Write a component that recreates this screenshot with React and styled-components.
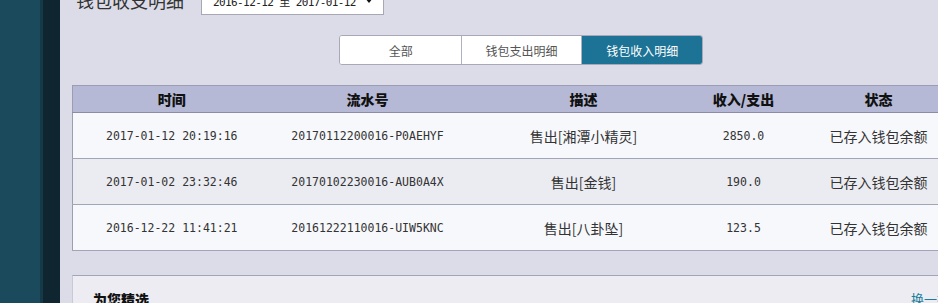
import React from "react";
import styled, { createGlobalStyle } from "styled-components";

const GlobalStyle = createGlobalStyle`
  html, body {
    margin: 0;
    padding: 0;
    overflow: hidden;
    background: #dcdce8;
  }
  body {
    font-family: "Noto Sans CJK SC", "Liberation Sans", sans-serif;
    color: #333;
  }
`;

const rows = [
  { time: "2017-01-12 20:19:16", serial: "20170112200016-P0AEHYF", desc: "售出[湘潭小精灵]", amount: "2850.0", status: "已存入钱包余额" },
  { time: "2017-01-02 23:32:46", serial: "20170102230016-AUB0A4X", desc: "售出[金钱]", amount: "190.0", status: "已存入钱包余额" },
  { time: "2016-12-22 11:41:21", serial: "20161222110016-UIW5KNC", desc: "售出[八卦坠]", amount: "123.5", status: "已存入钱包余额" },
];

const columns = [
  { title: "时间", width: 198 },
  { title: "流水号", width: 194 },
  { title: "描述", width: 238 },
  { title: "收入/支出", width: 82 },
  { title: "状态", width: 188 },
];

const tabs = ["全部", "钱包支出明细", "钱包收入明细"];

const mono = '"DejaVu Sans Mono", "Noto Sans CJK SC", monospace';

const Layout = styled.div`
  display: flex;
  width: 100vw;
  height: 303px;
  overflow: hidden;
`;

const Sidebar = styled.aside`
  flex: 0 0 60px;
  display: flex;
`;

const SideStrip = styled.div`
  flex: 0 0 ${(p) => p.$w}px;
  background: ${(p) => p.$c};
`;

const Main = styled.main`
  flex: 1;
  padding-left: 12px;
  background: #dcdce8;
  min-width: 0;
`;

const TitleRow = styled.div`
  display: flex;
  align-items: flex-end;
  gap: 17px;
  height: 30px;
  margin-top: -15px;
  padding-left: 4px;
`;

const Title = styled.h2`
  margin: 0;
  font-size: 18px;
  font-weight: normal;
  color: #333;
  line-height: 30px;
`;

const DateSelect = styled.div`
  display: flex;
  align-items: center;
  gap: 9px;
  width: 183px;
  height: 29px;
  box-sizing: border-box;
  padding-left: 11px;
  background: #fff;
  border: 1px solid #a8a8b4;
  font-family: ${mono};
  font-size: 11px;
  letter-spacing: -0.6px;
  color: #222;
  white-space: nowrap;
`;

const Caret = styled.span`
  width: 0;
  height: 0;
  border-left: 4px solid transparent;
  border-right: 4px solid transparent;
  border-top: 5px solid #111;
`;

const TabBar = styled.div`
  display: flex;
  margin: 20px 0 0 267px;
  width: 364px;
  height: 30px;
  box-sizing: border-box;
  border: 1px solid #a8a8b8;
  border-radius: 3px;
  background: #fff;
  overflow: hidden;
`;

const Tab = styled.button`
  flex: 1;
  border: 0;
  border-left: 1px solid ${(p) => (p.$first ? "transparent" : "#b0b0c0")};
  padding: 0;
  margin: 0;
  font-family: "Noto Sans CJK SC", sans-serif;
  font-size: 12px;
  color: ${(p) => (p.$active ? "#fff" : "#555")};
  background: ${(p) => (p.$active ? "#1d7396" : "#fff")};
  cursor: pointer;
`;

const Table = styled.table`
  margin-top: 20px;
  width: 900px;
  border-collapse: collapse;
  table-layout: fixed;
  border-left: 1px solid #9c9cb2;
`;

const HeadCell = styled.th`
  height: 26px;
  padding: 0;
  background: #b5b9d5;
  border-top: 1px solid #9c9cb2;
  border-bottom: 1px solid #8c8ca6;
  font-family: "Noto Sans CJK SC", sans-serif;
  font-size: 14px;
  font-weight: 900;
  color: #111;
  text-align: center;
`;

const Row = styled.tr`
  background: ${(p) => (p.$alt ? "#ebecf2" : "#f7f8fc")};
  border-bottom: 1px solid #a2a4b8;
`;

const Cell = styled.td`
  height: 45px;
  padding: 0;
  text-align: center;
  color: #333;
  font-family: ${(p) => (p.$mono ? mono : '"Noto Sans CJK SC", sans-serif')};
  font-size: ${(p) => (p.$mono ? "11.5px" : "14px")};
  white-space: nowrap;
`;

const Picks = styled.section`
  display: flex;
  justify-content: space-between;
  align-items: flex-start;
  margin-top: 24px;
  height: 60px;
  padding: 14px 0 0 20px;
  background: #ececf2;
  border-top: 1px solid #a2a4b8;
  border-left: 1px solid #c8c8d6;
`;

const PicksTitle = styled.h3`
  margin: 0;
  font-size: 14px;
  font-weight: 900;
  color: #111;
  line-height: 18px;
`;

const Refresh = styled.a`
  margin-right: -12px;
  font-size: 13px;
  color: #1a7c9c;
  line-height: 18px;
  text-decoration: none;
  white-space: nowrap;
`;

export default function App() {
  return (
    <>
      <GlobalStyle />
      <Layout>
        <Sidebar>
          <SideStrip $w={40} $c="#1a4a5c" />
          <SideStrip $w={3} $c="#143a48" />
          <SideStrip $w={17} $c="#0f2530" />
        </Sidebar>
        <Main>
          <TitleRow>
            <Title>钱包收支明细</Title>
            <DateSelect>
              <span>2016-12-12 至 2017-01-12</span>
              <Caret />
            </DateSelect>
          </TitleRow>
          <TabBar>
            {tabs.map((t, i) => (
              <Tab key={t} $first={i === 0} $active={i === 2}>
                {t}
              </Tab>
            ))}
          </TabBar>
          <Table>
            <colgroup>
              {columns.map((c) => (
                <col key={c.title} style={{ width: c.width }} />
              ))}
            </colgroup>
            <thead>
              <tr>
                {columns.map((c) => (
                  <HeadCell key={c.title}>{c.title}</HeadCell>
                ))}
              </tr>
            </thead>
            <tbody>
              {rows.map((r, i) => (
                <Row key={r.serial} $alt={i === 1}>
                  <Cell $mono>{r.time}</Cell>
                  <Cell $mono>{r.serial}</Cell>
                  <Cell>{r.desc}</Cell>
                  <Cell $mono>{r.amount}</Cell>
                  <Cell>{r.status}</Cell>
                </Row>
              ))}
            </tbody>
          </Table>
          <Picks>
            <PicksTitle>为您精选</PicksTitle>
            <Refresh href="#">换一批</Refresh>
          </Picks>
        </Main>
      </Layout>
    </>
  );
}
